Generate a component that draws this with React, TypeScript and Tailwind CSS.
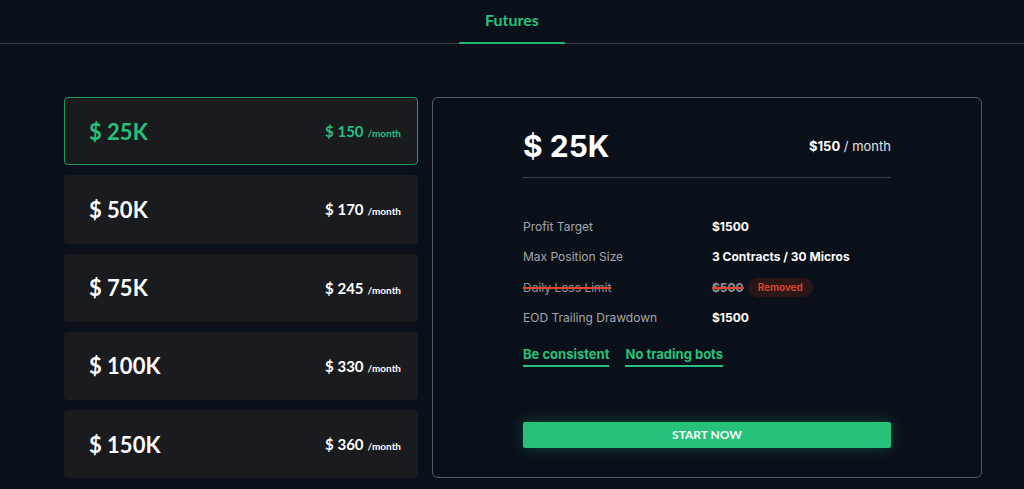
import { useState } from "react";

type Plan = {
  size: string;
  price: number;
};

const plans: Plan[] = [
  { size: "25K", price: 150 },
  { size: "50K", price: 170 },
  { size: "75K", price: 245 },
  { size: "100K", price: 330 },
  { size: "150K", price: 360 },
];

const roundFont = { fontFamily: "Lato, 'Open Sans', sans-serif" };
const interFont = { fontFamily: "Inter, 'Liberation Sans', sans-serif" };

export default function App() {
  const [selected, setSelected] = useState(0);
  const plan = plans[selected];

  return (
    <div className="min-h-[489px] w-[1024px] bg-[#0a1019] text-white" style={interFont}>
      <header className="flex h-[44px] justify-center border-b border-[#3b3e44]">
        <div className="-mb-px flex w-[106px] items-center justify-center border-b-2 border-[#22b573] pb-[3px]">
          <span className="text-[16px] font-bold text-[#26c17a]" style={roundFont}>
            Futures
          </span>
        </div>
      </header>

      <main className="flex gap-[14px] pl-[64px] pt-[53px]">
        <div className="flex w-[354px] flex-col gap-[10px]">
          {plans.map((item, index) => (
            <button
              key={item.size}
              type="button"
              onClick={() => setSelected(index)}
              className={`flex h-[68.25px] items-center justify-between rounded-[4px] border bg-[#1a1b1f] pl-[24px] pr-[16px] ${
                selected === index ? "border-[#1f9a5c]" : "border-transparent"
              }`}
              style={roundFont}
            >
              <span
                className={`text-[22px] font-bold ${selected === index ? "text-[#26c17a]" : "text-white"}`}
              >
                $ {item.size}
              </span>
              <span className={`font-bold ${selected === index ? "text-[#26c17a]" : "text-white"}`}>
                <span className="text-[15px]">$ {item.price}</span>
                <span className="ml-[4px] text-[10px]">/month</span>
              </span>
            </button>
          ))}
        </div>

        <section className="h-[381px] w-[550px] rounded-[6px] border border-[#5b5e64] px-[90px] pt-[26px]">
          <div className="flex items-center justify-between border-b border-[#3a3d43] pb-[8px]">
            <span className="text-[30px] font-bold">$ {plan.size}</span>
            <span className="text-[13px]">
              <span className="font-bold">${plan.price}</span>
              <span className="text-[#e4e6ea]"> / month</span>
            </span>
          </div>

          <div className="mt-[40px] flex flex-col gap-[13.5px] text-[12px]">
            <Row label="Profit Target" value="$1500" />
            <Row label="Max Position Size" value="3 Contracts / 30 Micros" />
            <div className="flex h-[17px] items-center">
              <span className="w-[189px] text-[#8d9096] line-through decoration-[#e5452f] decoration-2">
                Daily Loss Limit
              </span>
              <span className="font-bold text-[#8d9096] line-through decoration-[#e5452f] decoration-2">$500</span>
              <span className="ml-[4px] rounded-full bg-[#2a1616] px-[10px] py-[2px] text-[10px] font-semibold text-[#e5452f]">
                Removed
              </span>
            </div>
            <Row label="EOD Trailing Drawdown" value="$1500" />
          </div>

          <div className="mt-[18px] flex gap-[16px] text-[13px] font-bold text-[#26c17a]">
            <span className="border-b-2 border-[#26c17a] pb-[1px]">Be consistent</span>
            <span className="border-b-2 border-[#26c17a] pb-[1px]">No trading bots</span>
          </div>

          <button
            type="button"
            className="mt-[55px] flex h-[26px] w-full items-center justify-center rounded-[2px] bg-[#26c17a] text-[12px] font-bold text-white shadow-[0_0_14px_rgba(38,193,122,0.3)]"
            style={roundFont}
          >
            START NOW
          </button>
        </section>
      </main>
    </div>
  );
}

function Row({ label, value }: { label: string; value: string }) {
  return (
    <div className="flex h-[17px] items-center">
      <span className="w-[189px] text-[#a4a7ad]">{label}</span>
      <span className="font-bold text-white">{value}</span>
    </div>
  );
}
